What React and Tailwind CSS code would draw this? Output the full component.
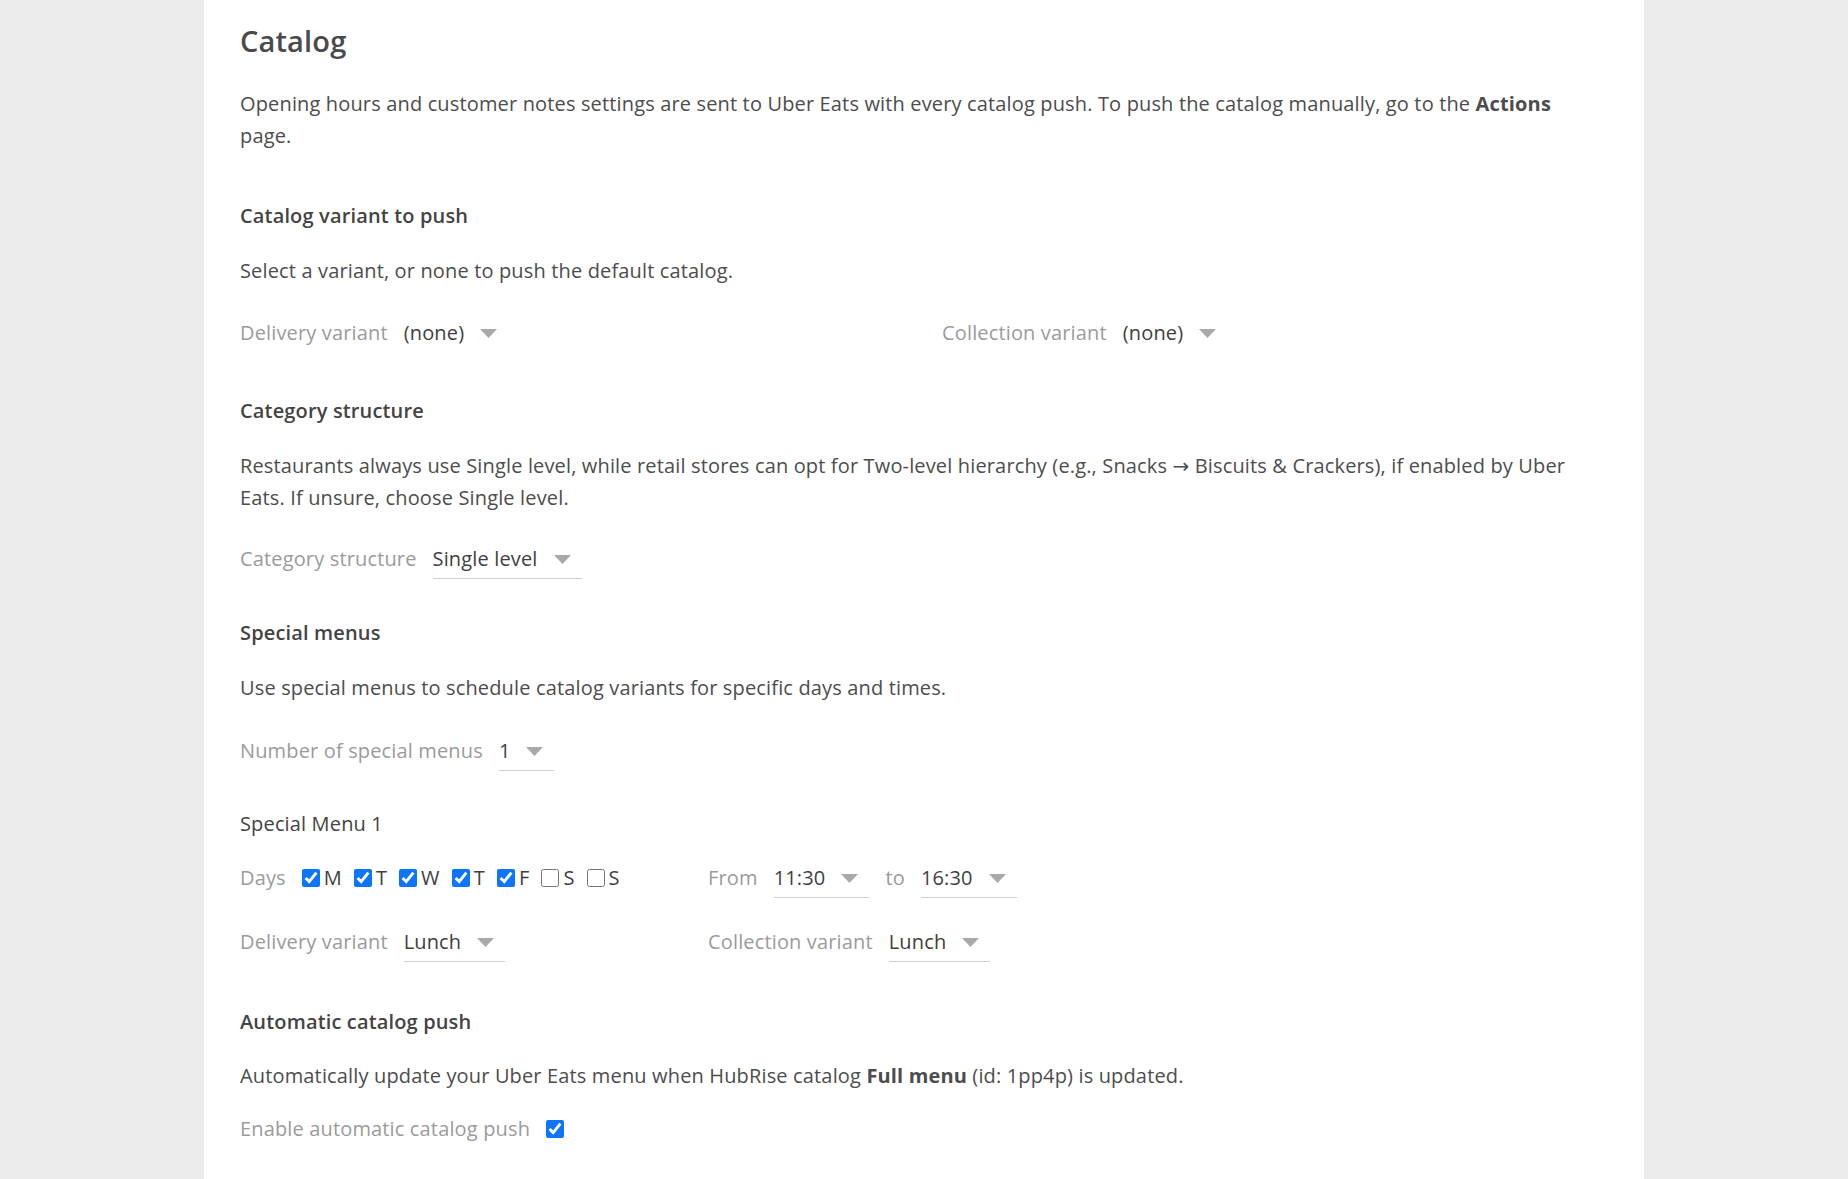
import React from 'react'

function Caret() {
  return (
    <svg className="ml-4 mr-[11px] shrink-0" width="17" height="9" viewBox="0 0 17 9">
      <path d="M0 0h17L8.5 9z" fill="#a9a9a9" />
    </svg>
  )
}

function Select({ value, underline = true }) {
  return (
    <span
      className={`inline-flex items-center leading-8 pb-[3px] border-b text-[#3f3f3f] ${
        underline ? 'border-[#cfcfcf]' : 'border-transparent'
      }`}
    >
      <span>{value}</span>
      <Caret />
    </span>
  )
}

function Field({ label, children }) {
  return (
    <div className="flex items-center gap-4">
      <span className="text-[#9b9b9b] leading-8 pb-[4px]">{label}</span>
      {children}
    </div>
  )
}

function Day({ letter, checked }) {
  return (
    <label className="flex items-center gap-[4px] mr-[12px]">
      <input type="checkbox" defaultChecked={checked} className="m-0 w-[18px] h-[18px] accent-[#0b76fb]" />
      <span className="text-[#3f3f3f]">{letter}</span>
    </label>
  )
}

const days = [
  ['M', true],
  ['T', true],
  ['W', true],
  ['T', true],
  ['F', true],
  ['S', false],
  ['S', false],
]

export default function App() {
  return (
    <div
      className="min-h-screen bg-[#ebebeb] text-[20px] tracking-[0.15px] text-[#4d4d4d]"
      style={{ fontFamily: '"Open Sans", "DejaVu Sans", "Noto Sans", sans-serif' }}
    >
      <div className="mx-auto w-[1440px] min-h-screen bg-white px-9 pt-[23px] pb-12">
        <h1 className="text-[29px] leading-9 font-semibold text-[#4a4a4a]">Catalog</h1>
        <p className="mt-[29px] leading-8 max-w-[1350px]">
          Opening hours and customer notes settings are sent to Uber Eats with every catalog push. To push the catalog
          manually, go to the <span className="font-bold">Actions</span> page.
        </p>

        <h2 className="mt-[48px] leading-8 font-semibold text-[#444]">Catalog variant to push</h2>
        <p className="mt-[23px] leading-8">Select a variant, or none to push the default catalog.</p>
        <div className="mt-[30px] grid grid-cols-2 gap-x-9">
          <Field label="Delivery variant">
            <Select value="(none)" underline={false} />
          </Field>
          <Field label="Collection variant">
            <Select value="(none)" underline={false} />
          </Field>
        </div>

        <h2 className="mt-[42px] leading-8 font-semibold text-[#444]">Category structure</h2>
        <p className="mt-[23px] leading-8 max-w-[1350px]">
          Restaurants always use Single level, while retail stores can opt for Two-level hierarchy (e.g., Snacks →
          Biscuits &amp; Crackers), if enabled by Uber Eats. If unsure, choose Single level.
        </p>
        <div className="mt-[29px]">
          <Field label="Category structure">
            <Select value="Single level" />
          </Field>
        </div>

        <h2 className="mt-[38px] leading-8 font-semibold text-[#444]">Special menus</h2>
        <p className="mt-[23px] leading-8">Use special menus to schedule catalog variants for specific days and times.</p>
        <div className="mt-[31px]">
          <Field label="Number of special menus">
            <Select value="1" />
          </Field>
        </div>

        <h3 className="mt-[37px] leading-8 text-[#444]">Special Menu 1</h3>
        <div className="mt-[22px] grid grid-cols-3 gap-x-9">
          <div className="flex items-center">
            <span className="text-[#9b9b9b] mr-4 leading-8 pb-[4px]">Days</span>
            <div className="flex items-center pb-[4px]">
              {days.map(([l, c], i) => (
                <Day key={i} letter={l} checked={c} />
              ))}
            </div>
          </div>
          <div className="flex items-center gap-4">
            <Field label="From">
              <Select value="11:30" />
            </Field>
            <Field label="to">
              <Select value="16:30" />
            </Field>
          </div>
        </div>
        <div className="mt-[28px] grid grid-cols-3 gap-x-9">
          <Field label="Delivery variant">
            <Select value="Lunch" />
          </Field>
          <Field label="Collection variant">
            <Select value="Lunch" />
          </Field>
        </div>

        <h2 className="mt-[44px] leading-8 font-semibold text-[#444]">Automatic catalog push</h2>
        <p className="mt-[22px] leading-8">
          Automatically update your Uber Eats menu when HubRise catalog <span className="font-bold">Full menu</span> (id:
          1pp4p) is updated.
        </p>
        <div className="mt-[21px] flex items-center gap-4">
          <span className="text-[#9b9b9b] leading-8">Enable automatic catalog push</span>
          <input type="checkbox" defaultChecked className="m-0 w-[18px] h-[18px] accent-[#0b76fb]" />
        </div>
      </div>
    </div>
  )
}
